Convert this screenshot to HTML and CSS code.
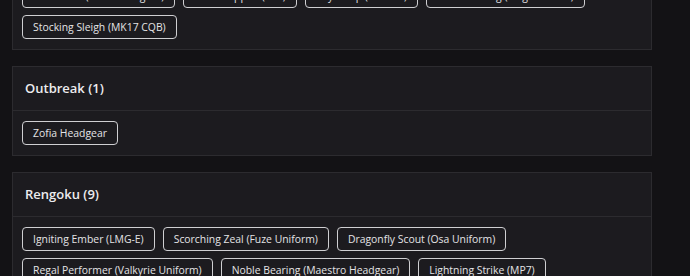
FILE: index.html
```html
<!DOCTYPE html>
<html lang="en">
<head>
    <meta charset="UTF-8">
    <meta name="viewport" content="width=device-width, initial-scale=1.0">
    <title>Seasonal Collections</title>
    <link rel="stylesheet" href="styles.css">
</head>
<body>

<div class="event-list">

    <div class="event-card">
        <div class="event-header">
            <h2>Snowfall (5)</h2>
        </div>
        <div class="event-items">
            <span class="item-tag">Elf Bonnet (Sens Headgear)</span>
            <span class="item-tag">Gift Wrapped (P12)</span>
            <span class="item-tag">Keyed Up (LS-SPW)</span>
            <span class="item-tag">In The Wrong (Ying Uniform)</span>
            <span class="item-tag">Stocking Sleigh (MK17 CQB)</span>
        </div>
    </div>

    <div class="event-card">
        <div class="event-header">
            <h2>Outbreak (1)</h2>
        </div>
        <div class="event-items">
            <span class="item-tag">Zofia Headgear</span>
        </div>
    </div>

    <div class="event-card">
        <div class="event-header">
            <h2>Rengoku (9)</h2>
        </div>
        <div class="event-items">
            <span class="item-tag">Igniting Ember (LMG-E)</span>
            <span class="item-tag">Scorching Zeal (Fuze Uniform)</span>
            <span class="item-tag">Dragonfly Scout (Osa Uniform)</span>
            <span class="item-tag">Regal Performer (Valkyrie Uniform)</span>
            <span class="item-tag">Noble Bearing (Maestro Headgear)</span>
            <span class="item-tag">Lightning Strike (MP7)</span>
            <span class="item-tag">Blazing Path (Hibana Uniform)</span>
            <span class="item-tag">Crimson Lotus (Echo Headgear)</span>
            <span class="item-tag">Ashen Blade (Type-89)</span>
        </div>
    </div>

</div>

</body>
</html>
```

FILE: styles.css
```css
body {
    font-family: 'Open Sans', sans-serif;
    margin: 0;
    padding: 0;
    background-color: #131215;
    color: #e8e8ea;
}

/* The list is scrolled a little, first card is cut at the top */
.event-list {
    width: 640px;
    margin-top: -71px;
    padding-left: 12px;
}

.event-card {
    background-color: #1c1b1f;
    border: 1px solid #2c2b2f;
    margin-bottom: 16px;
}

.event-header {
    height: 41px;
    display: flex;
    align-items: center;
    padding: 0 12px 2px;
    border-bottom: 1px solid #2c2b2f;
}

.event-header h2 {
    margin: 0;
    font-size: 13px;
    font-weight: 600;
    color: #ececee;
}

.event-items {
    display: flex;
    flex-wrap: wrap;
    gap: 7px 8px;
    padding: 10px 9px;
}

.item-tag {
    display: inline-block;
    height: 22px;
    line-height: 22px;
    padding: 0 10px;
    border: 1px solid #cfcfd2;
    border-radius: 4px;
    font-size: 10.4px;
    color: #e4e4e6;
    white-space: nowrap;
}
```
